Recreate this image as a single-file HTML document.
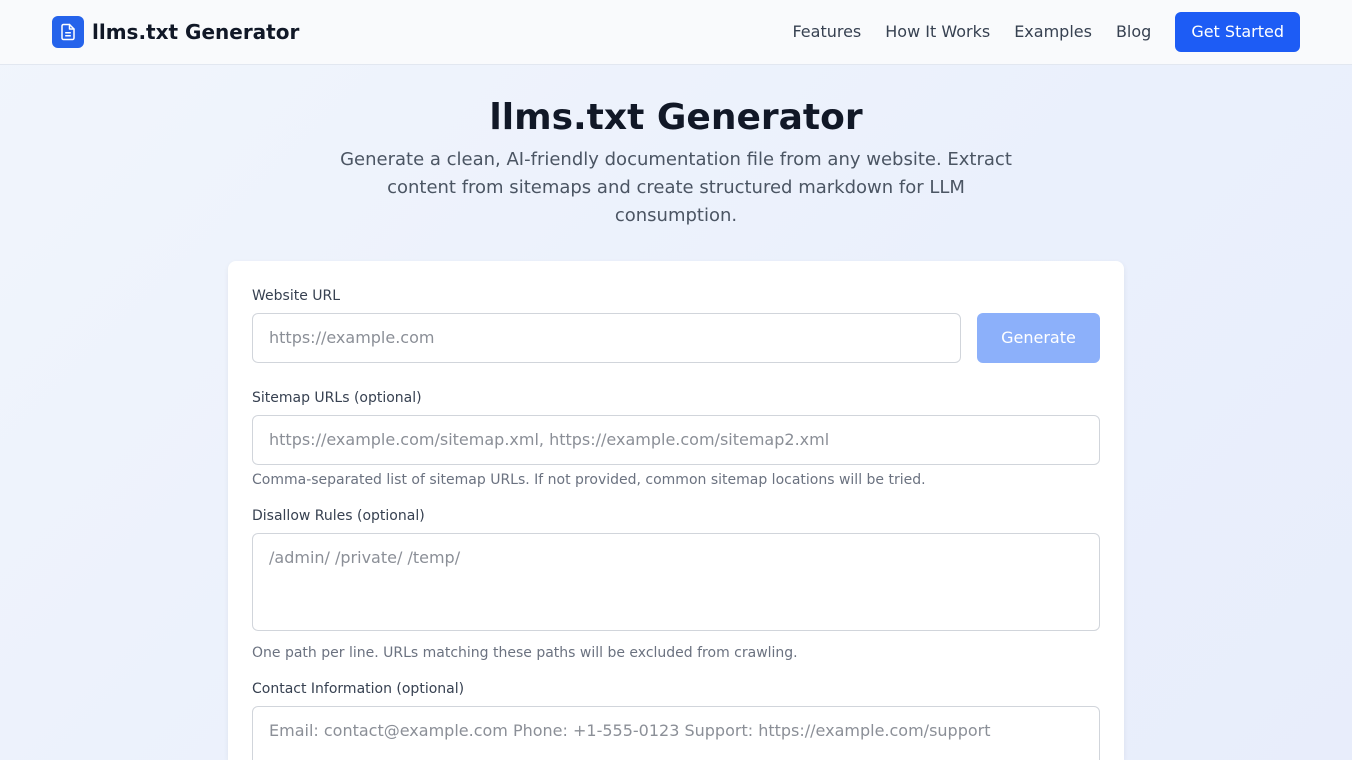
<!DOCTYPE html>
<html><head><meta charset="utf-8"><style>
*{box-sizing:border-box;margin:0;padding:0}
html{width:1352px;height:760px;overflow:hidden}
body{width:1352px;height:760px;overflow:hidden;position:relative;font-family:"DejaVu Sans","Liberation Sans",sans-serif;background:linear-gradient(135deg,#f1f5fc 0%,#eaf0fc 60%,#e8edfb 100%);color:#111827}
header{height:65px;background:#f9fafc;border-bottom:1px solid #e2e7f0;position:relative}
.logo{position:absolute;left:52px;top:16px;width:32px;height:32px;border-radius:6px;background:#2563eb;display:flex;align-items:center;justify-content:center}
.brand{position:absolute;left:92px;top:20px;font-size:20px;font-weight:bold;color:#111827}
nav{position:absolute;right:52px;top:12px;display:flex;align-items:center;font-size:16px;color:#374151}
nav a{margin-left:24px;position:relative;top:-1px}
.btn{background:#1d5cf5;color:#fff;border-radius:6px;padding:0 16px;height:40px;line-height:40px;margin-left:24px}
h1{position:absolute;top:97px;width:100%;text-align:center;font-size:36px;font-weight:bold;color:#111827}
.sub{position:absolute;top:146px;left:331px;width:690px;text-align:center;font-size:18px;line-height:28px;color:#4b5563}
.card{position:absolute;left:228px;top:261px;width:896px;height:499px;overflow:hidden;background:#fff;border-radius:8px 8px 0 0;box-shadow:0 2px 6px rgba(0,0,0,.06)}
.lbl{position:absolute;left:24px;font-size:14px;color:#374151}
.inp{position:absolute;left:24px;border:1px solid #d1d5db;border-radius:6px;font-size:16px;color:#8b8f97;padding-left:16px}
.help{position:absolute;left:24px;font-size:14px;color:#6b7280}
.gen{position:absolute;left:749px;top:52px;width:123px;height:50px;border-radius:6px;background:#8cb0fa;color:#fff;font-size:16px;text-align:center;line-height:50px}
</style></head><body>
<header>
<div class="logo"><svg width="18" height="18" viewBox="0 0 24 24" fill="none" stroke="#fff" stroke-width="2" stroke-linecap="round" stroke-linejoin="round"><path d="M14 2H6a2 2 0 0 0-2 2v16a2 2 0 0 0 2 2h12a2 2 0 0 0 2-2V8z"/><path d="M14 2v6h6"/><path d="M9 13h6M9 17h6"/></svg></div>
<div class="brand">llms.txt Generator</div>
<nav><a>Features</a><a>How It Works</a><a>Examples</a><a>Blog</a><span class="btn">Get Started</span></nav>
</header>
<h1>llms.txt Generator</h1>
<div class="sub">Generate a clean, AI-friendly documentation file from any website. Extract content from sitemaps and create structured markdown for LLM consumption.</div>
<div class="card">
<div class="lbl" style="top:27px">Website URL</div>
<div class="inp" style="top:52px;width:709px;height:50px;line-height:48px">https://example.com</div>
<div class="gen">Generate</div>
<div class="lbl" style="top:129px">Sitemap URLs (optional)</div>
<div class="inp" style="top:154px;width:848px;height:50px;line-height:48px">https://example.com/sitemap.xml, https://example.com/sitemap2.xml</div>
<div class="help" style="top:211px">Comma-separated list of sitemap URLs. If not provided, common sitemap locations will be tried.</div>
<div class="lbl" style="top:247px">Disallow Rules (optional)</div>
<div class="inp" style="top:272px;width:848px;height:98px;padding-top:14px">/admin/ /private/ /temp/</div>
<div class="help" style="top:384px">One path per line. URLs matching these paths will be excluded from crawling.</div>
<div class="lbl" style="top:420px">Contact Information (optional)</div>
<div class="inp" style="top:445px;width:848px;height:98px;padding-top:14px">Email: contact@example.com Phone: +1-555-0123 Support: https://example.com/support</div>
</div>
</body></html>
